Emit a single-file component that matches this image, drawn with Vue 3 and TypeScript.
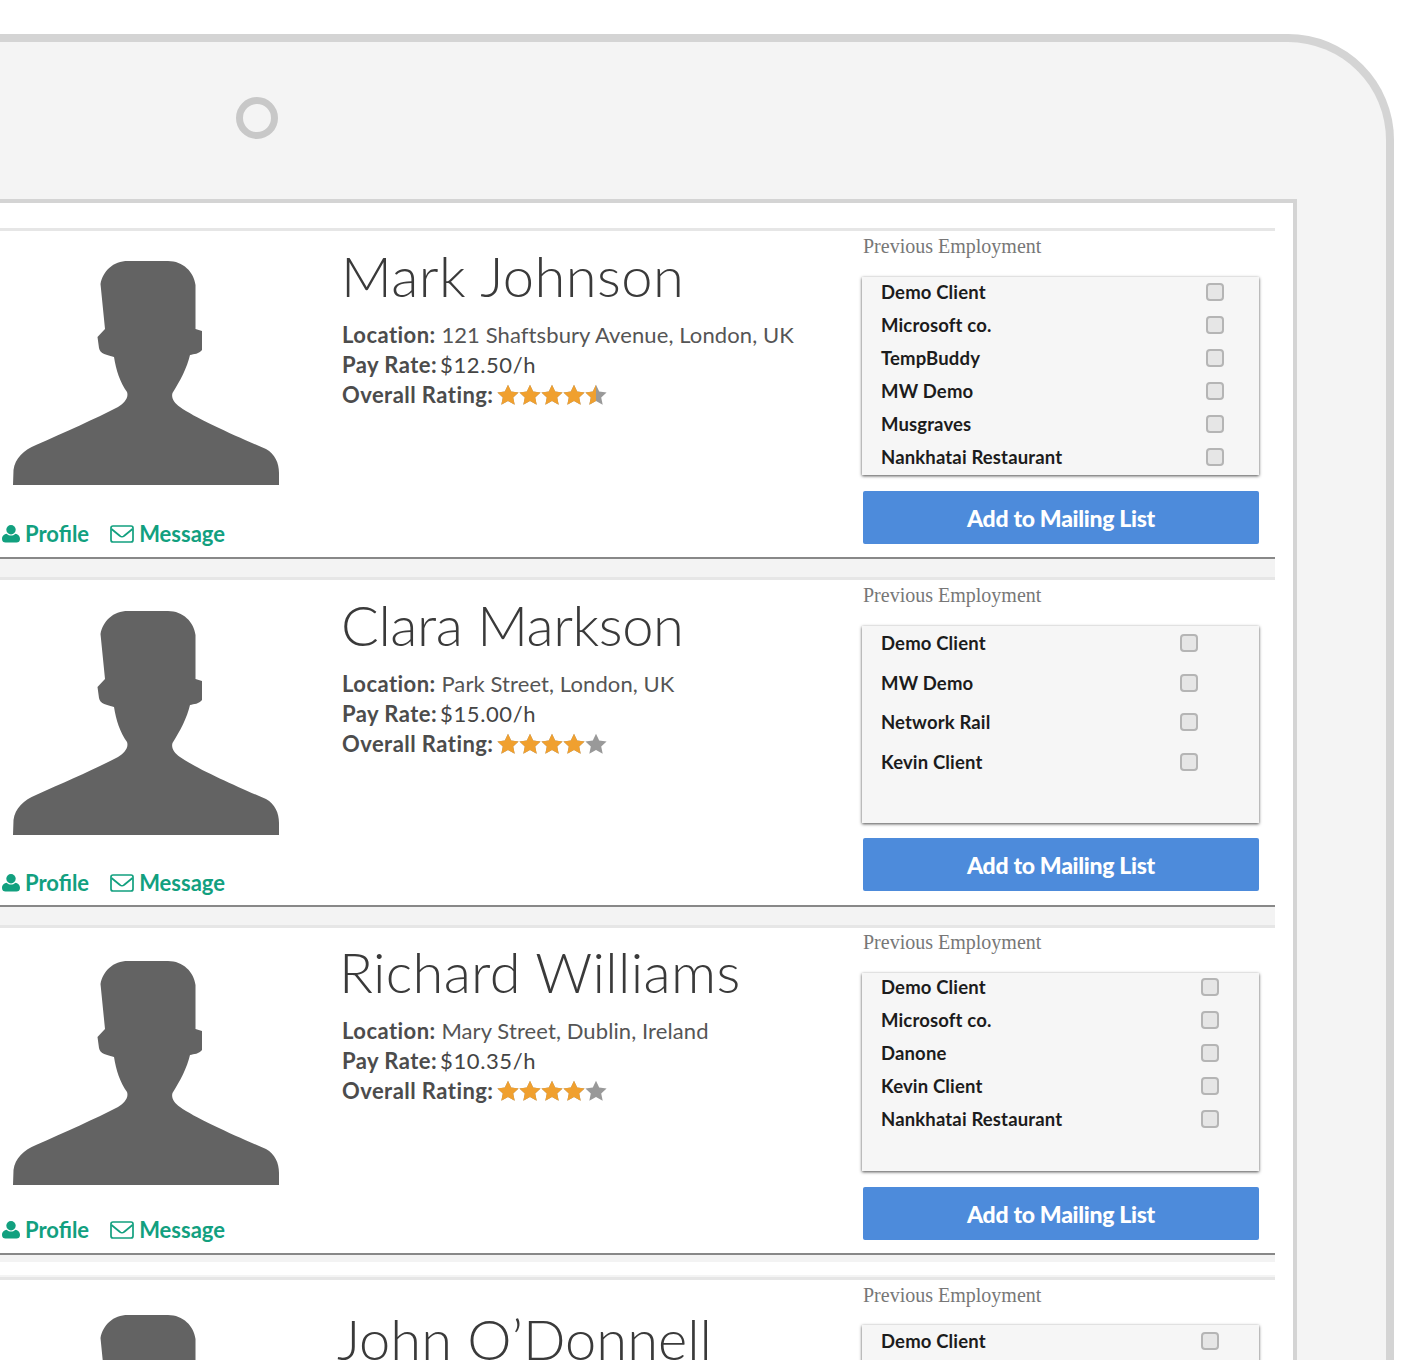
<script setup lang="ts">
interface Person {
  name: string
  nameX: number
  nameTop: number
  nameSpacing: number
  location: string
  rate: string
  rating: number
  avatarTop: number
  linkGap: number
  height: number
  empTop: number
  listGap: number
  listHeight: number
  firstShift: number
  buttonGap: number
  clients: string[]
  listClass: string
}

const people: Person[] = [
  { name: 'Mark Johnson', nameX: -1, nameTop: 11, nameSpacing: 0.45, location: '121 Shaftsbury Avenue, London, UK', rate: '$12.50/h', rating: 4.5, avatarTop: 30, linkGap: 34, height: 331, empTop: 3, listGap: 19, listHeight: 198, firstShift: -2, buttonGap: 16, listClass: 'tight wide', clients: ['Demo Client', 'Microsoft co.', 'TempBuddy', 'MW Demo', 'Musgraves', 'Nankhatai Restaurant'] },
  { name: 'Clara Markson', nameX: -1, nameTop: 11, nameSpacing: -0.45, location: 'Park Street, London, UK', rate: '$15.00/h', rating: 4, avatarTop: 31, linkGap: 33, height: 330, empTop: 3, listGap: 19, listHeight: 197, firstShift: -3, buttonGap: 15, listClass: 'loose', clients: ['Demo Client', 'MW Demo', 'Network Rail', 'Kevin Client'] },
  { name: 'Richard Williams', nameX: -3, nameTop: 10, nameSpacing: 0.35, location: 'Mary Street, Dublin, Ireland', rate: '$10.35/h', rating: 4, avatarTop: 33, linkGap: 30, height: 330, empTop: 2, listGap: 19, listHeight: 198, firstShift: -2.5, buttonGap: 16, listClass: 'tight', clients: ['Demo Client', 'Microsoft co.', 'Danone', 'Kevin Client', 'Nankhatai Restaurant'] },
  { name: 'John O’Donnell', nameX: -5, nameTop: 25, nameSpacing: 0, location: '', rate: '', rating: 0, avatarTop: 35, linkGap: 32, height: 330, empTop: 3, listGap: 17.5, listHeight: 198, firstShift: 0, buttonGap: 16, listClass: 'tight', clients: ['Demo Client'] },
]

const stars = [0, 1, 2, 3, 4]
const starPoints = '11,0.8 14.200,7.600 21.600,8.400 16.200,13.400 17.700,20.800 11,17 4.300,20.800 5.800,13.400 0.400,8.400 7.800,7.600'

function fillWidth(rating: number, i: number): number {
  return Math.max(0, Math.min(1, rating - i)) * 22
}
</script>

<template>
  <div class="page">
    <div class="device">
      <div class="camera"></div>
      <div class="screen">
        <div class="rows">
          <template v-for="(p, idx) in people" :key="p.name">
            <div v-if="idx === 3" class="strip"></div>
            <article class="row" :class="{ 'row-first': idx === 0 || idx === 3 }" :style="{ height: p.height + 'px' }">
              <div class="col-photo" :style="{ paddingTop: p.avatarTop + 'px' }">
                <svg class="avatar" viewBox="0 261 290 225" width="290" height="225" aria-hidden="true">
                  <path d="M128 261 H168 C183 261 194 272 195.500 285 L195.500 329 L202 331 L202 350 C199 354 194 354 190 355 C187 368 180 381 172.500 393 C171 398 174 403 180 407 C195 418 240 438 266 449 C275 454 279 463 279 473 L279 485 H13 L13.500 470 C15 458 24 450 36 445 C65 432 95 419 118 407 C124 403 129 398 127 392 C120 382 116 370 114 357 C107 355 100 354 99 348 L97.500 337 L105 329 L100.500 284 C103 271 113 261 128 261 Z" fill="#636363"/>
                </svg>
                <div v-if="p.location" class="links" :style="{ marginTop: p.linkGap + 'px' }">
                  <a class="link">
                    <svg viewBox="0 0 20 20" width="20" height="20" aria-hidden="true"><circle cx="10" cy="5.700" r="4.700" fill="currentColor"/><path d="M1 15 C1 11.500 3.500 10 5.500 9.700 C7 11 8.500 11.500 10 11.500 C11.500 11.500 13 11 14.500 9.700 C16.500 10 19 11.500 19 15 C19 17.500 17.500 18.500 15.500 18.500 H4.500 C2.500 18.500 1 17.500 1 15 Z" fill="currentColor"/></svg>
                    <span>Profile</span>
                  </a>
                  <a class="link link-msg">
                    <svg viewBox="0 0 24 18" width="24" height="18" aria-hidden="true"><rect x="1" y="1" width="22" height="16" rx="2" fill="none" stroke="currentColor" stroke-width="1.700"/><path d="M1.500 4 L10 11 C11 12 13 12 14 11 L22.500 4" fill="none" stroke="currentColor" stroke-width="1.700"/></svg>
                    <span>Message</span>
                  </a>
                </div>
              </div>
              <div class="col-info" :style="{ paddingTop: p.nameTop + 'px' }">
                <h2 class="name" :style="{ marginLeft: p.nameX + 'px', letterSpacing: p.nameSpacing + 'px' }">{{ p.name }}</h2>
                <div v-if="p.location" class="facts">
                  <div class="fact"><b>Location:</b> {{ p.location }}</div>
                  <div class="fact"><b class="rate-label">Pay Rate:</b><span class="rate">{{ p.rate }}</span></div>
                  <div class="fact rating-line">
                    <b>Overall Rating:</b>
                    <span class="stars">
                      <svg v-for="i in stars" :key="i" viewBox="0 0 22 22" width="22" height="22" aria-hidden="true">
                        <clipPath :id="'c' + idx + i"><rect x="0" y="0" :width="fillWidth(p.rating, i)" height="22"/></clipPath>
                        <polygon :points="starPoints" fill="#999999"/>
                        <polygon :points="starPoints" fill="#f0a02f" :clip-path="'url(#c' + idx + i + ')'"/>
                      </svg>
                    </span>
                  </div>
                </div>
              </div>
              <div class="col-emp">
                <div class="emp-title" :style="{ marginTop: p.empTop + 'px' }">Previous Employment</div>
                <ul class="clients" :class="p.listClass" :style="{ marginTop: p.listGap + 'px', height: p.listHeight + 'px' }">
                  <li v-for="(c, n) in p.clients" :key="c" :style="n === 0 ? { marginTop: p.firstShift + 'px' } : undefined">
                    <span>{{ c }}</span><i class="check"></i>
                  </li>
                </ul>
                <button class="add" :style="{ marginTop: p.buttonGap + 'px' }">Add to Mailing List</button>
              </div>
            </article>
          </template>
        </div>
      </div>
    </div>
  </div>
</template>

<style>
html, body { margin: 0; background: #fff; }
</style>

<style scoped>
.page {
  height: 1360px;
  overflow: hidden;
  padding-top: 34px;
  box-sizing: border-box;
  background: #fff;
  font-family: "Lato", "Open Sans", sans-serif;
}
.device {
  width: 1386px;
  height: 1400px;
  box-sizing: content-box;
  background: #f4f4f4;
  border-top: 8px solid #d4d4d4;
  border-right: 8px solid #d4d4d4;
  border-top-right-radius: 106px;
  padding-top: 55px;
}
.camera {
  width: 28px;
  height: 28px;
  margin-left: 236px;
  border: 7px solid #c8c8c8;
  border-radius: 50%;
  margin-bottom: 60px;
}
.screen {
  width: 1293px;
  background: #fff;
  border-top: 4px solid #d4d4d4;
  border-right: 4px solid #d4d4d4;
  padding-top: 25px;
  height: 1300px;
}
.rows {
  width: 1275px;
  background: #f3f3f3;
  display: flex;
  flex-direction: column;
}
.strip {
  flex: none;
  height: 13px;
  margin-top: 7px;
  background: #fff;
  border-bottom: 2px solid #f4f4f4;
}
.row {
  display: flex;
  box-sizing: border-box;
  background: #fff;
  border-top: 3px solid #e6e6e6;
  border-bottom: 2px solid #888;
  flex: none;
  margin-top: 18px;
}
.row.row-first { margin-top: 0; }
.col-photo {
  width: 342px;
  flex: none;
  box-sizing: border-box;
}
.avatar { display: block; }
.links {
  display: flex;
  align-items: center;
  gap: 21px;
  padding-left: 1px;
  color: #12a07f;
  font-size: 22px;
  font-weight: 700;
  letter-spacing: 0;
}
.link { display: flex; align-items: center; gap: 4px; }
.link-msg { gap: 5px; }
.col-info { width: 520px; flex: none; box-sizing: border-box; }
.name {
  margin: 0;
  font-size: 56px;
  line-height: 68px;
  font-weight: 300;
  color: #3a3a3a;
  white-space: nowrap;
}
.facts { margin-top: 10px; }
.fact {
  font-size: 22px;
  line-height: 30px;
  color: #555;
  letter-spacing: 0.1px;
  white-space: nowrap;
}
.fact b { font-weight: 700; color: #4c4c4c; letter-spacing: 0.45px; }
.rate { margin-left: 3px; color: #444; letter-spacing: 0.6px; }
.rating-line { display: flex; align-items: center; gap: 4px; }
.stars { display: flex; }
.stars svg { display: block; }
.col-emp { width: 398px; flex: none; box-sizing: border-box; padding-left: 1px; }
.emp-title {
  font-family: "Liberation Serif", serif;
  font-size: 20px;
  line-height: 24px;
  color: #777;
}
.clients {
  display: flow-root;
  list-style: none;
  padding: 0 0 0 19px;
  box-sizing: border-box;
  background: #f6f6f6;
  box-shadow: 0 1px 3px 0 rgba(0, 0, 0, 0.7);
  width: 397px;
  margin: 0 0 0 -1px;
}
.clients li {
  display: flex;
  justify-content: space-between;
  align-items: center;
  font-size: 18.500px;
  font-weight: 700;
  letter-spacing: 0.15px;
  color: #1c1c1c;
}
.clients.tight li { height: 33px; }
.clients.tight { padding-right: 40px; }
.clients.tight.wide { padding-right: 35px; }
.clients.loose li { height: 39.700px; }
.clients.loose { padding-right: 61px; }
.check {
  display: block;
  width: 18px;
  height: 18px;
  box-sizing: border-box;
  border: 2px solid #b5b5b5;
  border-radius: 4px;
  background: #e6e6e6;
}
.add {
  display: block;
  width: 396px;
  height: 53px;
  border: none;
  border-radius: 2px;
  background: #4d8bdb;
  color: #fff;
  font-family: inherit;
  font-size: 23px;
  font-weight: 900;
  letter-spacing: -0.3px;
}
</style>
